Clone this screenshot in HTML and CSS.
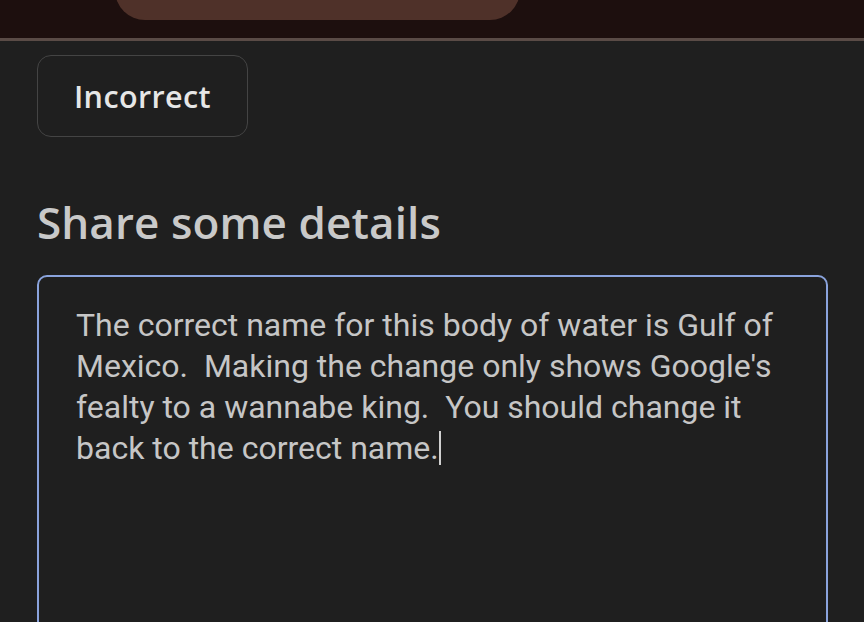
FILE: index.html
```html
<!DOCTYPE html>
<html>
<head>
<meta charset="utf-8">
<link rel="stylesheet" href="styles.css">
</head>
<body>
<header class="topbar">
  <div class="pill"></div>
</header>
<main class="content">
  <button class="chip">Incorrect</button>
  <h2 class="heading">Share some details</h2>
  <div class="field">
    <p class="field-text">The correct name for this body of water is Gulf of Mexico.&nbsp; Making the change only shows Google's fealty to a wannabe king.&nbsp; You should change it back to the correct name.<span class="caret"></span></p>
  </div>
</main>
</body>
</html>
```
FILE: styles.css
```css
* { box-sizing: border-box; }
html, body { margin: 0; padding: 0; }
body {
  width: 864px;
  height: 622px;
  overflow: hidden;
  background: #1f1f1f;
  font-family: "Open Sans", sans-serif;
}
.topbar {
  height: 41px;
  background: #1d0f0e;
  border-bottom: 3px solid #5a4b46;
  position: relative;
}
.pill {
  position: absolute;
  left: 115px;
  top: -40px;
  width: 405px;
  height: 60px;
  border-radius: 30px;
  background: #4f3129;
}
.content {
  padding: 14px 36px 0 37px;
  height: 581px;
  overflow: hidden;
}
.chip {
  display: block;
  width: 211px;
  height: 82px;
  background: #1f1f1f;
  border: 1.5px solid #444444;
  border-radius: 14px;
  color: #e6e6e6;
  font-family: "Open Sans", sans-serif;
  font-size: 30.5px;
  font-weight: 600;
  letter-spacing: 0.4px;
  padding: 0;
  margin: 0;
}
.heading {
  margin: 57px 0 0 0;
  font-size: 44px;
  font-weight: 600;
  color: #c9c9c9;
  line-height: 56px;
  letter-spacing: 0.1px;
}
.field {
  margin-top: 25px;
  width: 791px;
  height: 400px;
  border: 2px solid #8aa3dc;
  border-radius: 10px;
  padding: 28px 37px 26px 37px;
}
.field-text {
  margin: 0;
  font-family: Roboto, sans-serif;
  font-size: 32px;
  line-height: 41px;
  color: #c6c6c6;
}
.caret {
  display: inline-block;
  width: 2px;
  height: 34px;
  background: #d0d0d0;
  vertical-align: -6px;
}
```
